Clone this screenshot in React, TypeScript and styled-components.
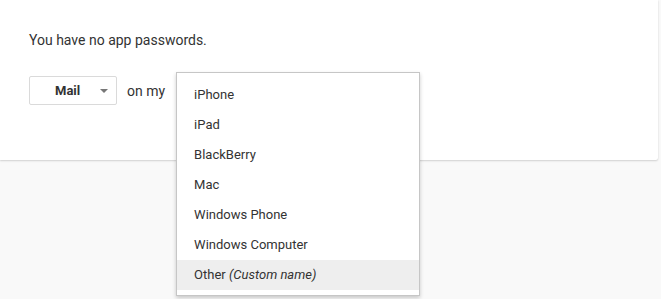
import React, {useState} from 'react'
import styled, {createGlobalStyle} from 'styled-components'

const devices = [
  'iPhone',
  'iPad',
  'BlackBerry',
  'Mac',
  'Windows Phone',
  'Windows Computer',
]

const GlobalStyle = createGlobalStyle`
  html, body {
    margin: 0;
    padding: 0;
    background: #f9f9f9;
    font-family: Roboto, "Liberation Sans", Arial, sans-serif;
    color: #333;
  }
`

export default function App() {
  const [hovered, setHovered] = useState<string>('other')

  return (
    <>
      <GlobalStyle />
      <Page>
        <Card>
          <Message>You have no app passwords.</Message>
          <Row>
            <SelectButton>
              <span>Mail</span>
              <Caret />
            </SelectButton>
            <Label>on my</Label>
            <DeviceSelect>
              <Menu>
                {devices.map((name) => (
                  <MenuItem
                    key={name}
                    active={hovered === name}
                    onMouseEnter={() => setHovered(name)}
                  >
                    {name}
                  </MenuItem>
                ))}
                <MenuItem active={hovered === 'other'} onMouseEnter={() => setHovered('other')}>
                  Other <em>(Custom name)</em>
                </MenuItem>
              </Menu>
            </DeviceSelect>
          </Row>
        </Card>
      </Page>
    </>
  )
}

const Page = styled.div`
  width: 661px;
  height: 299px;
  overflow: hidden;
`

const Card = styled.div`
  width: 658px;
  height: 160px;
  box-sizing: border-box;
  padding: 30px 0 0 29px;
  background: #fff;
  border-radius: 0 0 2px 0;
  box-shadow: 0 1px 2px rgba(0, 0, 0, 0.16), 0 0 1px rgba(0, 0, 0, 0.08);
`

const Message = styled.div`
  font-size: 14px;
  line-height: 20px;
`

const Row = styled.div`
  display: flex;
  align-items: center;
  margin-top: 26px;
`

const SelectButton = styled.div`
  display: flex;
  align-items: center;
  width: 88px;
  height: 29px;
  box-sizing: border-box;
  padding: 0 8px 0 25px;
  border: 1px solid #dadada;
  border-radius: 2px;
  font-size: 13px;
  font-weight: 700;
  color: #333;

  span {
    flex: 1;
  }
`

const Caret = styled.i`
  width: 0;
  height: 0;
  border-left: 4px solid transparent;
  border-right: 4px solid transparent;
  border-top: 4px solid #777;
`

const Label = styled.span`
  margin-left: 10px;
  font-size: 14px;
`

const DeviceSelect = styled.div`
  position: relative;
  margin-left: 11px;
  width: 244px;
  height: 29px;
`

const Menu = styled.ul`
  position: absolute;
  top: -4px;
  left: 0;
  width: 244px;
  box-sizing: border-box;
  margin: 0;
  padding: 7px 0 5px;
  list-style: none;
  background: #fff;
  border: 1px solid #c6c6c6;
  box-shadow: 0 2px 4px rgba(0, 0, 0, 0.2);
  z-index: 1;
`

const MenuItem = styled.li<{active: boolean}>`
  height: 30px;
  line-height: 30px;
  padding: 0 17px;
  font-size: 13px;
  color: #333;
  background: ${({active}) => (active ? '#eeeeee' : 'transparent')};
  cursor: pointer;

  em {
    font-style: italic;
  }
`
